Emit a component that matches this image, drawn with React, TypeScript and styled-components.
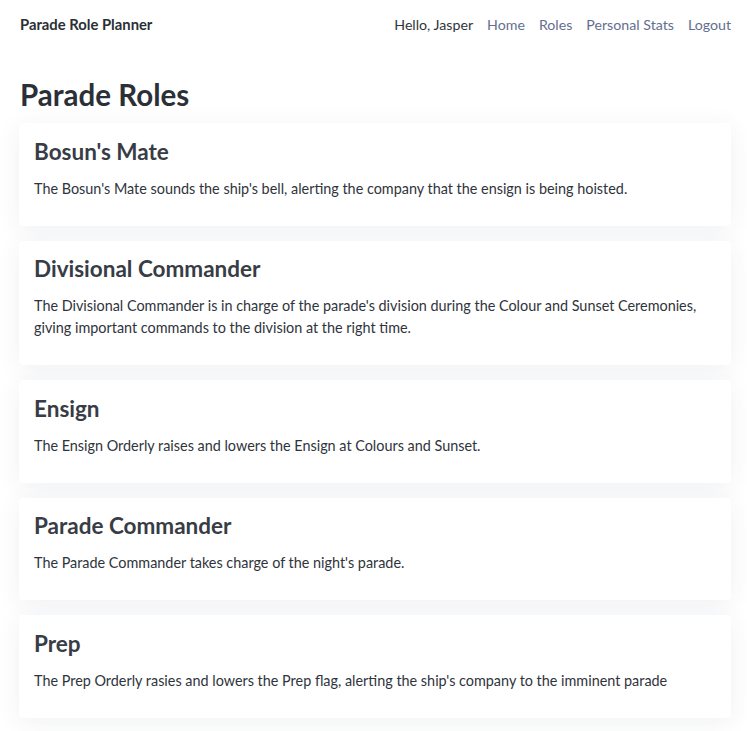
import React from "react";
import styled, { createGlobalStyle } from "styled-components";

const Global = createGlobalStyle`
  html, body { margin: 0; padding: 0; background: #ffffff; }
  body { font-family: Lato, "Noto Sans", "Liberation Sans", sans-serif; color: #343a40; }
  * { box-sizing: border-box; }
`;

const Page = styled.div`
  min-height: 731px;
  padding: 0 16px 12px 19px;
`;

const NavBar = styled.nav`
  display: flex;
  align-items: center;
  justify-content: space-between;
  height: 48px;
`;

const Brand = styled.div`
  font-size: 14.8px;
  font-weight: 700;
  color: #2b2f36;
  padding-left: 1px;
`;

const NavLinks = styled.div`
  display: flex;
  align-items: center;
  gap: 14px;
  font-size: 14.2px;
`;

const NavItem = styled.a<{ $muted?: boolean }>`
  color: ${(p) => (p.$muted ? "#2f343b" : "#646e8e")};
  text-decoration: none;
`;

const Title = styled.h1`
  font-size: 29.5px;
  font-weight: 700;
  color: #2b3038;
  margin: 30px 0 11px 1px;
  line-height: 34px;
`;

const List = styled.div`
  display: flex;
  flex-direction: column;
  gap: 15px;
`;

const Card = styled.section`
  background: #fff;
  border-radius: 4px;
  padding: 16.5px 15px 1px;
  box-shadow: 0 4px 24px rgba(40, 50, 90, 0.07);
`;

const CardTitle = styled.h3`
  font-size: 22.5px;
  font-weight: 700;
  color: #383c45;
  margin: 0 0 14px;
  line-height: 24px;
`;

const CardText = styled.p`
  font-size: 14.4px;
  line-height: 22px;
  color: #2f343c;
  margin: 0 0 25px;
`;

const roles = [
  {
    name: "Bosun's Mate",
    text: "The Bosun's Mate sounds the ship's bell, alerting the company that the ensign is being hoisted.",
  },
  {
    name: "Divisional Commander",
    text: "The Divisional Commander is in charge of the parade's division during the Colour and Sunset Ceremonies, giving important commands to the division at the right time.",
  },
  {
    name: "Ensign",
    text: "The Ensign Orderly raises and lowers the Ensign at Colours and Sunset.",
  },
  {
    name: "Parade Commander",
    text: "The Parade Commander takes charge of the night's parade.",
  },
  {
    name: "Prep",
    text: "The Prep Orderly rasies and lowers the Prep flag, alerting the ship's company to the imminent parade",
  },
];

export default function App() {
  return (
    <>
      <Global />
      <Page>
        <NavBar>
          <Brand>Parade Role Planner</Brand>
          <NavLinks>
            <NavItem $muted>Hello, Jasper</NavItem>
            <NavItem href="#">Home</NavItem>
            <NavItem href="#">Roles</NavItem>
            <NavItem href="#">Personal Stats</NavItem>
            <NavItem href="#">Logout</NavItem>
          </NavLinks>
        </NavBar>
        <Title>Parade Roles</Title>
        <List>
          {roles.map((r) => (
            <Card key={r.name}>
              <CardTitle>{r.name}</CardTitle>
              <CardText>{r.text}</CardText>
            </Card>
          ))}
        </List>
      </Page>
    </>
  );
}
